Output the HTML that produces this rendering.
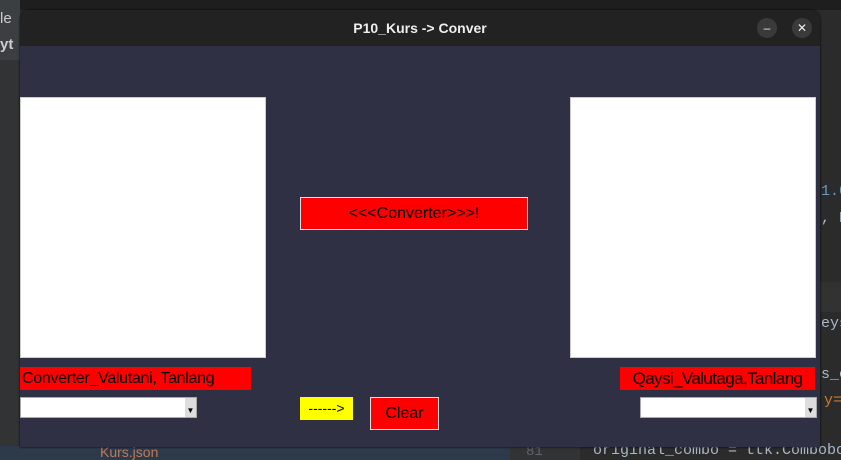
<!DOCTYPE html>
<html><head><style>
html,body{margin:0;width:841px;height:460px;overflow:hidden}
body{background:#2b2b2b;position:relative;font-family:"Liberation Sans",sans-serif}
.a{position:absolute;white-space:nowrap}
.ide{font-family:"Liberation Mono",monospace;font-size:15px;color:#a9b7c6}
</style></head><body>
<div class="a" style="left:0;top:0;width:841px;height:10px;background:#1e1e1e"></div>
<div class="a" style="left:0;top:0;width:20px;height:60px;background:#3c3f41"></div>
<div class="a" style="left:0;top:60px;width:20px;height:400px;background:#313335"></div>
<div class="a" style="left:820px;top:282px;width:21px;height:30px;background:#323232"></div>
<div class="a ide" style="left:0;top:10px;color:#ccc;font-family:'Liberation Sans';font-size:15px">le</div>
<div class="a ide" style="left:0;top:36px;color:#ccc;font-family:'Liberation Sans';font-size:15px;font-weight:bold">yt</div>
<div class="a ide" style="left:821px;top:183px;color:#6897bb">1.0</div>
<div class="a ide" style="left:821px;top:210px">, E</div>
<div class="a ide" style="left:821px;top:315px">eys</div>
<div class="a ide" style="left:821px;top:366px">s_c</div>
<div class="a ide" style="left:824px;top:392px;color:#cc7832">y=</div>
<div class="a" style="left:0;top:446px;width:841px;height:14px;background:#2b2b2b"></div>
<div class="a" style="left:0;top:446px;width:510px;height:14px;background:#2d3a4a"></div>
<div class="a ide" style="left:100px;top:444px;color:#c0795c;font-family:'Liberation Sans';font-size:14px">Kurs.json</div>
<div class="a" style="left:510px;top:446px;width:70px;height:14px;background:#313335"></div>
<div class="a ide" style="left:526px;top:444px;color:#606366;font-size:14px">81</div>
<div class="a ide" style="left:593px;top:442px;font-size:15px">original_combo = ttk.Combobo</div>
<div class="a" style="left:20px;top:10px;width:800px;height:437px;background:#303045;border-radius:10px 10px 0 0;overflow:hidden;box-shadow:0 0 2px #000">
 <div class="a" style="left:0;top:0;width:800px;height:36px;background:#222"></div>
 <div class="a" style="left:0;top:10px;width:800px;text-align:center;color:#eee;font-weight:bold;font-size:14px">P10_Kurs -&gt; Conver</div>
 <div class="a" style="left:737px;top:8px;width:20px;height:20px;border-radius:50%;background:#3a3a3a;color:#eee;font-size:12px;text-align:center;line-height:20px">–</div>
 <div class="a" style="left:772px;top:8px;width:20px;height:20px;border-radius:50%;background:#3a3a3a;color:#eee;font-size:12px;text-align:center;line-height:20px">✕</div>
 <div class="a" style="left:0;top:87px;width:244px;height:259px;background:#fff;border:1px solid #ccc"></div>
 <div class="a" style="left:550px;top:87px;width:244px;height:259px;background:#fff;border:1px solid #ccc"></div>
 <div class="a" style="left:280px;top:187px;width:226px;height:31px;background:#f00;border:1px solid #ddd;text-align:center;line-height:31px;font-size:16px">&lt;&lt;&lt;Converter&gt;&gt;&gt;!</div>
 <div class="a" style="left:0;top:357px;width:229px;height:23px;background:#f00;line-height:23px;font-size:16px;padding-left:2px;letter-spacing:-0.3px">Converter_Valutani, Tanlang</div>
 <div class="a" style="left:600px;top:357px;width:195px;height:23px;background:#f00;line-height:23px;font-size:17px;text-align:center;letter-spacing:-0.6px">Qaysi_Valutaga,Tanlang</div>
 <div class="a" style="left:0;top:387px;width:175px;height:19px;background:#fff;border:1px solid #aaa"><div class="a" style="right:0;top:0;width:11px;height:19px;background:#ddd;font-size:8px;text-align:center;line-height:26px">▼</div></div>
 <div class="a" style="left:620px;top:387px;width:175px;height:19px;background:#fff;border:1px solid #aaa"><div class="a" style="right:0;top:0;width:11px;height:19px;background:#ddd;font-size:8px;text-align:center;line-height:26px">▼</div></div>
 <div class="a" style="left:280px;top:387px;width:53px;height:23px;background:#ff0;line-height:23px;font-size:14px;text-align:center">------&gt;</div>
 <div class="a" style="left:350px;top:387px;width:67px;height:31px;background:#f00;border:1px solid #ddd;line-height:31px;font-size:16px;text-align:center">Clear</div>
</div>
</body></html>
